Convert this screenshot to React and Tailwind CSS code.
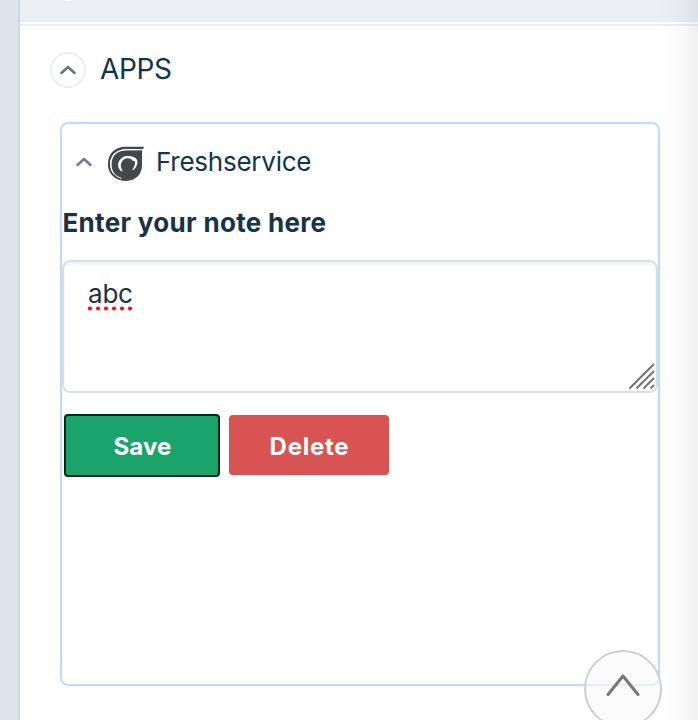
function Chevron({ className, points, viewBox, width }) {
  return (
    <svg className={className} viewBox={viewBox} fill="none" stroke="currentColor" strokeWidth={width} strokeLinecap="round" strokeLinejoin="round">
      <path d={points} />
    </svg>
  );
}

function FreshserviceLogo() {
  return (
    <svg className="ml-[16px] h-9 w-9 shrink-0" viewBox="0 0 36 36">
      <path fill="#454848" d="M17.500 .8H36L35.100 2.900H19C8 2.900 2 9.500 2 18C2 27 8 32.800 17.500 34.600C7.500 34.600 0 27.500 0 18C0 7.500 7 .8 17.500 .8Z" />
      <path fill="#454848" d="M19 4.300H34V19C34 28.500 27.500 34.900 18 34.900C7.500 33.500 3.300 27 3.300 18.500C3.300 10 9 4.300 19 4.300Z" />
      <path fill="none" stroke="#454848" strokeWidth="1.600" d="M.9 19C1.200 28 8.200 34 18 34" />
      <path fill="none" stroke="#fff" strokeWidth="1" d="M31 3.700H19C9 3.700 2.900 9.500 2.900 18C2.900 25 7 30.500 13.500 32.400" />
      <path fill="#fff" d="M13.800 25.600C9.200 23 9 16.500 12.500 13.300C14 11.600 15.600 10.600 17.600 10.100H22C24.500 10.600 26.500 11.300 28.500 13.100C30.200 15.500 29.500 18.500 27.900 21.200L25.300 24.300L24.500 23.700C26.200 20.500 27.500 17.600 27 15.200L24.700 14.700C22.500 11.400 16.600 11.500 14.400 14.900C12.400 17.500 12.300 20.800 13.800 23.200L14.600 24.800Z" />
    </svg>
  );
}

export default function App() {
  return (
    <div className="relative flex h-[720px] w-[698px] overflow-hidden bg-white font-['Inter','Liberation_Sans',sans-serif] text-[#12344d]">
      <aside className="w-5 shrink-0 border-r-2 border-[#cfd7df] bg-[#dfe4ec]" />
      <main className="min-w-0 flex-1">
        <header className="flex h-[22px] justify-start overflow-hidden bg-[#ebeef3]">
          <div className="-mt-[35px] ml-[30px] h-9 w-9 rounded-full bg-white" />
        </header>
        <div className="mt-[2px] h-[2px] bg-[#ebeef2]" />
        <div className="ml-[30px] mt-[26px] flex h-9 items-center">
          <button className="flex h-9 w-9 items-center justify-center rounded-full border-2 border-[#ebeff3] text-[#6f7282]">
            <Chevron className="-mt-[1px] h-[10px] w-4" viewBox="0 0 16 10" points="M1.500 8L8 2L14.500 8" width="2.500" />
          </button>
          <h2 className="ml-[14px] -mt-[3px] text-[28px] leading-9 tracking-[-0.4px]">APPS</h2>
        </div>
        <section className="ml-10 mt-[34px] h-[564px] w-[600px] rounded-lg border-2 border-[#bbdcfe]">
          <div className="flex h-[80px] items-center pl-[14px]">
            <Chevron className="-mt-1 h-[10px] w-4 text-[#747986]" viewBox="0 0 16 10" points="M1.500 8L8 2L14.500 8" width="2.500" />
            <FreshserviceLogo />
            <h3 className="ml-[12px] -mt-1 text-[26px] leading-8 tracking-[-0.25px]">Freshservice</h3>
          </div>
          <label className="block h-[56px] pl-[0.500px] text-[26px] font-bold leading-[38px] tracking-[0.31px] text-[#183247]">Enter your note here</label>
          <div className="relative h-[133px] w-[596px] rounded-lg border-2 border-[#dadfe3] pl-6 pt-[16px] text-[26px] leading-8 tracking-[-0.2px] text-[#183247] shadow-[inset_0_3px_3px_rgba(24,50,71,0.07)]">
            <span className="block w-11">abc</span>
            <svg className="absolute left-6 top-[44px] h-[5px] w-[45px]" viewBox="0 0 45 5" fill="#ff0c18">
              {[2, 10, 18, 26, 34, 42].map((x) => <circle key={x} cx={x} cy="2.500" r="2.100" />)}
            </svg>
            <svg className="absolute bottom-[2px] right-[1px] h-[26px] w-[26px]" viewBox="0 0 26 26" stroke="#747474" strokeWidth="2">
              <path d="M.5 25.500L25 1M7.500 25.500L25 8M14.500 25.500L25 15M21.500 25.500L25 22" />
            </svg>
          </div>
          <div className="ml-[2px] mt-[21px] flex items-start gap-[9px] text-[24px] font-bold text-white">
            <button className="h-[63px] w-[156px] rounded-[4px] border-2 border-[#02251b] bg-[#1ba36c] pl-[1px] pt-[2px] tracking-[0.1px]">Save</button>
            <button className="mt-[1px] h-[60px] w-[160px] rounded-[4px] bg-[#d85352] pl-[1px] pt-[3px] tracking-[0.75px]">Delete</button>
          </div>
        </section>
      </main>
      <div className="pointer-events-none absolute right-0 top-0 h-full w-10 bg-linear-to-r from-black/0 via-black/[0.015] to-black/[0.06]" />
      <button className="absolute left-[584px] top-[650px] flex h-[78px] w-[78px] justify-center rounded-full border-2 border-[#cfcfcf] bg-[#f9f9f9]/60 pt-[21px] text-[#777]">
        <Chevron className="h-6 w-9" viewBox="0 0 36 24" points="M3 21.500L18 3L33 21.500" width="3" />
      </button>
    </div>
  );
}
